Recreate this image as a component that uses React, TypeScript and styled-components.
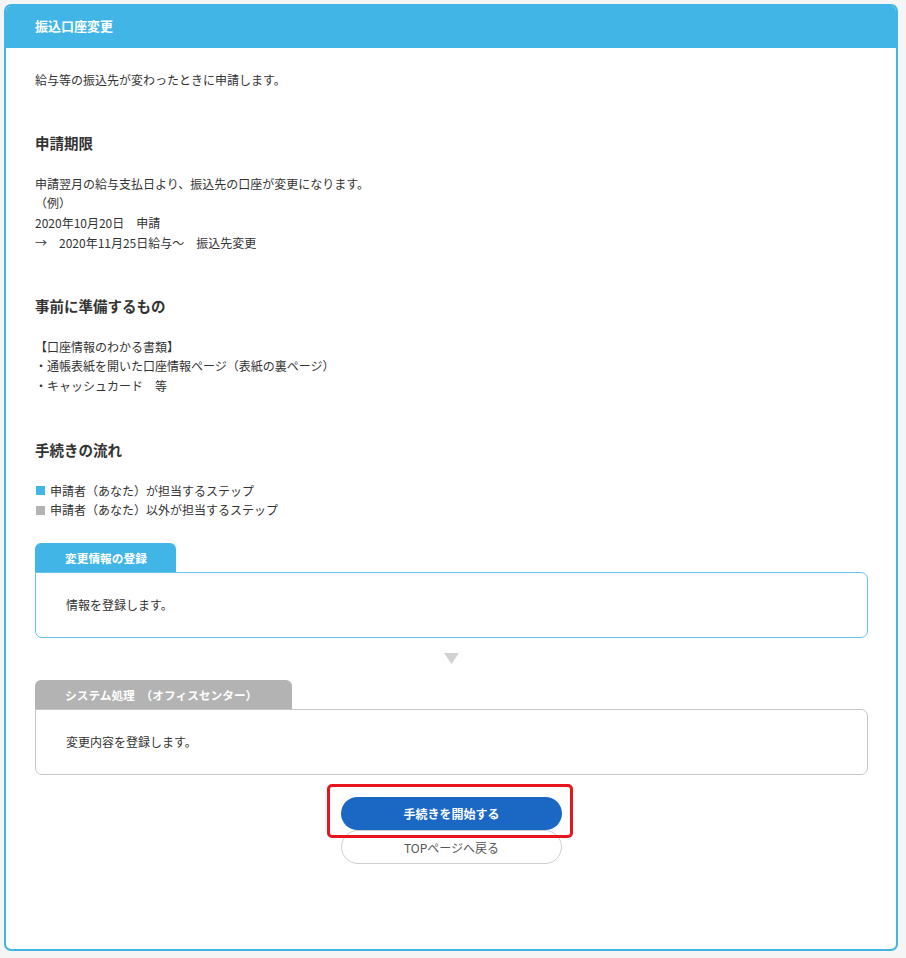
import React from "react";
import styled, { createGlobalStyle } from "styled-components";

const Global = createGlobalStyle`
  html, body { margin: 0; padding: 0; background: #f5f5f5; }
  body { font-family: "Noto Sans CJK JP", "Noto Sans", sans-serif; color: #333; }
  * { box-sizing: border-box; }
`;

const Page = styled.div`
  padding: 4px 8px 8px 4px;
`;

const Card = styled.section`
  background: #fff;
  border: 2px solid #41b6e6;
  border-radius: 7px;
  overflow: hidden;
`;

const Header = styled.header`
  display: flex;
  align-items: center;
  margin: -2px -2px 0;
  padding-left: 31px;
  height: 44px;
  background: #41b6e6;
`;

const Title = styled.h1`
  margin: 0;
  color: #fff;
  font-size: 13px;
  font-weight: 700;
  line-height: 20px;
`;

const Body = styled.div`
  padding: 22px 28px 85px 29px;
`;

const Text = styled.p`
  margin: 0;
  font-size: 12px;
  line-height: 19.7px;
  color: #333;
`;

const Heading = styled.h2<{ $gap?: number }>`
  margin: ${(p) => p.$gap ?? 43}px 0 21px;
  font-size: 14.5px;
  font-weight: 700;
  line-height: 20px;
  color: #333;
`;

const LegendList = styled.div`
  display: flex;
  flex-direction: column;
  margin-top: 1px;
`;

const Legend = styled.div`
  display: flex;
  align-items: center;
  gap: 5px;
  font-size: 12px;
  line-height: 19.7px;
`;

const Swatch = styled.span<{ $color: string }>`
  display: inline-block;
  width: 9px;
  height: 9px;
  margin-left: 1px;
  background: ${(p) => p.$color};
`;

const Step = styled.div<{ $first?: boolean }>`
  display: flex;
  flex-direction: column;
  align-items: flex-start;
  margin-top: ${(p) => (p.$first ? "23px" : "0")};
`;

const Tab = styled.div<{ $gray?: boolean }>`
  height: 29px;
  display: flex;
  align-items: center;
  padding: 0 ${(p) => (p.$gray ? "35px" : "29px")} 0 30px;
  background: ${(p) => (p.$gray ? "#b3b3b3" : "#41b6e6")};
  color: #fff;
  font-size: 11.7px;
  font-weight: 700;
  border-radius: 6px 6px 0 0;
  white-space: pre;
`;

const StepBox = styled.div<{ $gray?: boolean }>`
  align-self: stretch;
  border: 1px solid ${(p) => (p.$gray ? "#c6c6c6" : "#66c3ec")};
  border-radius: 0 7px 7px 7px;
  padding: 22px 30px 22px;
  font-size: 12px;
  line-height: 20px;
`;

const Arrow = styled.div`
  display: flex;
  justify-content: center;
  padding: 15px 0 16px;
`;

const Buttons = styled.div`
  display: flex;
  flex-direction: column;
  align-items: center;
  margin-top: 22px;
`;

const Highlight = styled.div`
  position: relative;
  display: flex;
`;

const RedFrame = styled.div`
  position: absolute;
  left: -14px;
  top: -13px;
  right: -11px;
  bottom: -8px;
  border: 3px solid #e8141e;
  border-radius: 5px;
  pointer-events: none;
`;

const PrimaryButton = styled.button`
  width: 221px;
  height: 33px;
  border: none;
  border-radius: 17px;
  background: #1b67c4;
  color: #fff;
  font-family: inherit;
  font-size: 12px;
  font-weight: 700;
  cursor: pointer;
`;

const SecondaryButton = styled.button`
  width: 221px;
  height: 34px;
  border: 1px solid #cfcfcf;
  border-radius: 17px;
  background: #fff;
  color: #555;
  font-family: inherit;
  font-size: 12px;
  cursor: pointer;
`;

export default function App() {
  return (
    <>
      <Global />
      <Page>
        <Card>
          <Header>
            <Title>振込口座変更</Title>
          </Header>
          <Body>
            <Text>給与等の振込先が変わったときに申請します。</Text>

            <Heading>申請期限</Heading>
            <Text>申請翌月の給与支払日より、振込先の口座が変更になります。</Text>
            <Text>（例）</Text>
            <Text>2020年10月20日　申請</Text>
            <Text>→　2020年11月25日給与〜　振込先変更</Text>

            <Heading>事前に準備するもの</Heading>
            <Text>【口座情報のわかる書類】</Text>
            <Text>・通帳表紙を開いた口座情報ページ（表紙の裏ページ）</Text>
            <Text>・キャッシュカード　等</Text>

            <Heading $gap={44}>手続きの流れ</Heading>
            <LegendList>
              <Legend>
                <Swatch $color="#41b6e6" />
                申請者（あなた）が担当するステップ
              </Legend>
              <Legend>
                <Swatch $color="#b3b3b3" />
                申請者（あなた）以外が担当するステップ
              </Legend>
            </LegendList>

            <Step $first>
              <Tab>変更情報の登録</Tab>
              <StepBox>情報を登録します。</StepBox>
            </Step>
            <Arrow>
              <svg width="15" height="11" viewBox="0 0 15 11">
                <polygon points="0,0 15,0 7.5,11" fill="#d3d3d3" />
              </svg>
            </Arrow>
            <Step>
              <Tab $gray>{"システム処理　（オフィスセンター）"}</Tab>
              <StepBox $gray>変更内容を登録します。</StepBox>
            </Step>

            <Buttons>
              <Highlight>
                <PrimaryButton>手続きを開始する</PrimaryButton>
                <RedFrame />
              </Highlight>
              <SecondaryButton>TOPページへ戻る</SecondaryButton>
            </Buttons>
          </Body>
        </Card>
      </Page>
    </>
  );
}
